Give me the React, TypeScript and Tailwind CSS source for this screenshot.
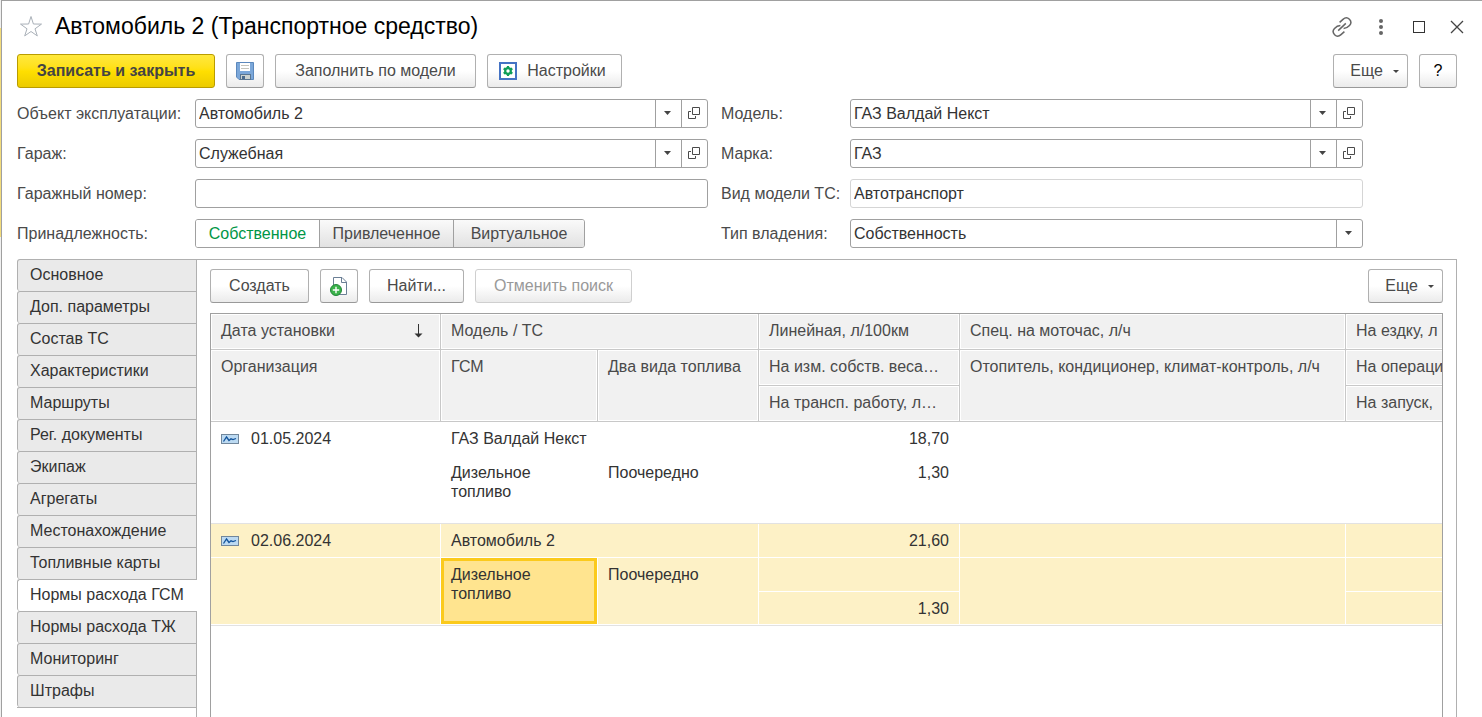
import { useState } from 'react';
import type { ReactNode } from 'react';

const tabs = [
  'Основное',
  'Доп. параметры',
  'Состав ТС',
  'Характеристики',
  'Маршруты',
  'Рег. документы',
  'Экипаж',
  'Агрегаты',
  'Местонахождение',
  'Топливные карты',
  'Нормы расхода ГСМ',
  'Нормы расхода ТЖ',
  'Мониторинг',
  'Штрафы',
];

const ownership = ['Собственное', 'Привлеченное', 'Виртуальное'];

function classNames(...classes: (string | false)[]) {
  return classes.filter(Boolean).join(' ');
}

function StarIcon() {
  return (
    <svg width="24" height="24" viewBox="0 0 24 24" fill="none" stroke="#a9b0b8" strokeWidth="1">
      <path d="M12 1.5 L14.4 9 L22.5 9.1 L16 13.8 L18.3 20.9 L12 16.5 L5.7 20.9 L8 13.8 L1.5 9.1 L9.6 9 Z" />
    </svg>
  );
}

function LinkIcon() {
  return (
    <svg width="20" height="20" viewBox="0 0 20 20" fill="none" stroke="#666" strokeWidth="1.5">
      <path d="M7.6 5.4 L11 2.4 C13 0.6 15.6 0.5 17.4 2.3 C19.2 4.1 19.2 6.6 17.5 8.5 C16.2 9.9 14.6 11.3 11.6 11.4" />
      <path d="M12.4 14.6 L9 17.6 C7 19.4 4.4 19.5 2.6 17.7 C0.8 15.9 0.8 13.4 2.5 11.5 C3.8 10.1 5.4 8.7 8.4 8.6" />
      <path d="M6.2 13.6 L13.8 6.4" />
    </svg>
  );
}

function SaveIcon() {
  return (
    <svg width="18" height="18" viewBox="0 0 18 18">
      <path d="M0.5 0.5 H17.5 V17.5 H3 L0.5 15 Z" fill="#7ba7d9" stroke="#5b88bd" />
      <rect x="4" y="1" width="10" height="8" fill="#fff" />
      <path d="M5 3.5 H13 M5 6.5 H13" stroke="#c4c4bc" />
      <rect x="4.5" y="12.5" width="10" height="5" fill="#ccd2cf" stroke="#5a7590" />
      <rect x="6" y="14" width="3" height="3" fill="#4a6a8c" />
    </svg>
  );
}

function SettingsIcon() {
  return (
    <svg width="18" height="18" viewBox="0 0 18 18">
      <rect x="1" y="1" width="16" height="16" fill="#fff" stroke="#4573c4" strokeWidth="2" />
      <circle cx="9" cy="9" r="2.8" fill="none" stroke="#0f9d58" strokeWidth="2.2" />
      <path
        d="M9 4 V6 M9 12 V14 M4.7 6.5 L6.4 7.5 M11.6 10.5 L13.3 11.5 M4.7 11.5 L6.4 10.5 M11.6 7.5 L13.3 6.5"
        stroke="#0f9d58"
        strokeWidth="2.2"
      />
    </svg>
  );
}

function CopyIcon() {
  return (
    <svg width="18" height="20" viewBox="0 0 18 20">
      <path d="M3.5 1.5 H12 L16.5 6 V18.5 H3.5 Z" fill="#fff" stroke="#6b7f95" />
      <path d="M11.5 1.5 V6.5 H16.5" fill="none" stroke="#6b7f95" />
      <circle cx="6" cy="14" r="5.5" fill="#3bb24a" stroke="#22863a" />
      <path d="M6 10.8 V17.2 M2.8 14 H9.2" stroke="#fff" strokeWidth="1.4" />
    </svg>
  );
}

function OpenIcon() {
  return (
    <svg width="12" height="12" viewBox="0 0 12 12" fill="none" stroke="#4a4a4a">
      <path d="M4.5 0.5 H11.5 V7.5 H4.5 Z" />
      <path d="M3 4.5 H0.5 V11.5 H7.5 V9" />
    </svg>
  );
}

function RecordIcon() {
  return (
    <svg width="18" height="10" viewBox="0 0 18 10" className="shrink-0">
      <rect x="0.5" y="0.5" width="17" height="9" fill="#bcdaf2" stroke="#71879c" />
      <path d="M2.5 7.5 L5.5 3 L8 6.5 L10 4.8 L12 5.5 L15 4.5" fill="none" stroke="#11539c" strokeWidth="1.3" />
    </svg>
  );
}

function Caret({ small = false }: { small?: boolean }) {
  return (
    <svg width={small ? 6 : 7} height={small ? 3 : 4} viewBox="0 0 8 4" preserveAspectRatio="none" fill="#444">
      <path d="M0 0 H8 L4 4 Z" />
    </svg>
  );
}

type ButtonProps = { children: ReactNode; label?: string; className?: string; disabled?: boolean };

function Button({ children, label, className = 'px-4', disabled = false }: ButtonProps) {
  return (
    <button
      type="button"
      aria-label={label}
      disabled={disabled}
      className={classNames(
        'flex h-[34px] shrink-0 items-center justify-center rounded-[3px] border bg-linear-to-b from-white from-50% to-[#ebebeb] whitespace-nowrap',
        disabled ? 'border-[#cfcfcf] text-[#999]' : 'border-[#b0b0b0] border-b-[#999] text-[#4a4a4a]',
        className
      )}
    >
      {children}
    </button>
  );
}

type FieldProps = { id: string; label: string; value?: string; kind?: 'ref' | 'select' | 'text' | 'readonly'; second?: boolean };

function Field({ id, label, value = '', kind = 'ref', second = false }: FieldProps) {
  const isList = kind === 'ref' || kind === 'select';
  return (
    <>
      <label htmlFor={id} className={classNames('whitespace-nowrap text-[#4a4a4a]', second && 'pl-[13px]')}>
        {label}
      </label>
      <div
        className={classNames(
          'flex h-[29px] min-w-0 rounded-[3px] border bg-white',
          kind === 'readonly' ? 'border-[#d5d5d5]' : 'border-[#a0a0a0]'
        )}
      >
        {isList ? (
          <div className="relative flex min-w-0 flex-1">
            <select id={id} defaultValue={value} className="min-w-0 flex-1 appearance-none pr-7 pl-[3px] outline-none">
              <option>{value}</option>
            </select>
            <span className="pointer-events-none absolute inset-y-0 right-0 flex w-[26px] items-center justify-center border-l border-[#a0a0a0] pr-0.5 pb-px">
              <Caret />
            </span>
          </div>
        ) : (
          <input id={id} defaultValue={value} readOnly={kind === 'readonly'} className="min-w-0 flex-1 px-[3px] outline-none" />
        )}
        {kind === 'ref' && (
          <button
            type="button"
            aria-label="Открыть"
            className="flex w-[26px] items-center justify-center border-l border-[#a0a0a0] pr-px pb-px"
          >
            <OpenIcon />
          </button>
        )}
      </div>
    </>
  );
}

function HeadCell({ children, rowSpan, colSpan }: { children: ReactNode; rowSpan?: number; colSpan?: number }) {
  return (
    <th
      rowSpan={rowSpan}
      colSpan={colSpan}
      className="overflow-hidden border-r border-b border-[#c8c8c8] bg-[#f1f1f1] px-2.5 pt-[7px] text-left align-top font-normal whitespace-nowrap text-[#4a4a4a] shadow-[inset_0_0_0_1px_#fff]"
    >
      {children}
    </th>
  );
}

type CellProps = { children?: ReactNode; rowSpan?: number; colSpan?: number; className?: string; selected?: boolean };

function Cell({ children, rowSpan, colSpan, className = '', selected = false }: CellProps) {
  return (
    <td
      rowSpan={rowSpan}
      colSpan={colSpan}
      className={classNames(
        'pt-[7px] pl-2.5 align-top leading-[19px]',
        selected ? 'border-r border-b border-white bg-[#fdf1c6] pr-2.5' : 'pr-[11px]',
        className
      )}
    >
      {children}
    </td>
  );
}

function DateValue({ value }: { value: string }) {
  return (
    <div className="flex items-center gap-3">
      <RecordIcon />
      {value}
    </div>
  );
}

function RatesTable() {
  return (
    <table className="w-full min-w-[1320px] table-fixed border-separate border-spacing-0">
      <colgroup>
        <col className="w-[230px]" />
        <col className="w-[157px]" />
        <col className="w-[161px]" />
        <col className="w-[201px]" />
        <col className="w-[386px]" />
        <col />
      </colgroup>
      <thead className="leading-[19px]">
        <tr className="h-9">
          <HeadCell>
            <span className="flex items-center justify-between pr-[7px]">
              Дата установки
              <svg width="9" height="14" viewBox="0 0 9 14" fill="#333">
                <path d="M4 0 H5 V9.5 H8.5 L4.5 13.5 L0.5 9.5 H4 Z" />
              </svg>
            </span>
          </HeadCell>
          <HeadCell colSpan={2}>Модель / ТС</HeadCell>
          <HeadCell>Линейная, л/100км</HeadCell>
          <HeadCell>Спец. на моточас, л/ч</HeadCell>
          <HeadCell>На ездку, л</HeadCell>
        </tr>
        <tr className="h-9">
          <HeadCell rowSpan={2}>Организация</HeadCell>
          <HeadCell rowSpan={2}>ГСМ</HeadCell>
          <HeadCell rowSpan={2}>Два вида топлива</HeadCell>
          <HeadCell>На изм. собств. веса…</HeadCell>
          <HeadCell rowSpan={2}>Отопитель, кондиционер, климат-контроль, л/ч</HeadCell>
          <HeadCell>На операцию</HeadCell>
        </tr>
        <tr className="h-9">
          <HeadCell>На трансп. работу, л…</HeadCell>
          <HeadCell>На запуск,</HeadCell>
        </tr>
      </thead>
      <tbody className="text-[#333]">
        <tr className="h-[34px]">
          <Cell>
            <DateValue value="01.05.2024" />
          </Cell>
          <Cell colSpan={2}>ГАЗ Валдай Некст</Cell>
          <Cell className="text-right">18,70</Cell>
          <Cell colSpan={2} />
        </tr>
        <tr className="h-[68px]">
          <Cell className="border-b border-[#e2e2e2]" />
          <Cell className="border-b border-[#e2e2e2]">Дизельное топливо</Cell>
          <Cell className="border-b border-[#e2e2e2]">Поочередно</Cell>
          <Cell className="border-b border-[#e2e2e2] text-right">1,30</Cell>
          <Cell colSpan={2} className="border-b border-[#e2e2e2]" />
        </tr>
        <tr className="h-[34px] shadow-[inset_0_1px_0_#fff]">
          <Cell selected>
            <DateValue value="02.06.2024" />
          </Cell>
          <Cell selected colSpan={2}>
            Автомобиль 2
          </Cell>
          <Cell selected className="text-right">
            21,60
          </Cell>
          <Cell selected />
          <Cell selected />
        </tr>
        <tr className="h-[34px]">
          <Cell selected rowSpan={2} />
          <td
            rowSpan={2}
            className="border-r border-b border-white bg-[#ffe48f] px-2.5 pt-[7px] align-top leading-[19px] shadow-[inset_0_0_0_3px_#fbca1c]"
          >
            Дизельное топливо
          </td>
          <Cell selected rowSpan={2}>
            Поочередно
          </Cell>
          <Cell selected />
          <Cell selected rowSpan={2} />
          <Cell selected />
        </tr>
        <tr className="h-[33px]">
          <Cell selected className="text-right">
            1,30
          </Cell>
          <Cell selected />
        </tr>
        <tr>
          <td colSpan={6} className="border-t border-[#e2e2e2]" />
        </tr>
      </tbody>
    </table>
  );
}

export default function App() {
  const [activeTab, setActiveTab] = useState('Нормы расхода ГСМ');

  return (
    <div className="flex h-screen overflow-hidden bg-white font-['Liberation_Sans',Arial,sans-serif] text-base text-[#333]">
      <div className="w-px shrink-0 bg-[#f0f0f0] pt-7">
        <div className="h-[209px] bg-[#f3dc7b]" />
      </div>
      <div className="flex min-w-0 flex-1 flex-col border-t border-l border-[#a0a0a0] pr-[25px] pl-[15px]">
        <header className="flex h-[53px] shrink-0 items-center pb-0.5">
          <button type="button" aria-label="В избранное" className="mx-0.5">
            <StarIcon />
          </button>
          <h1 className="ml-2.5 flex-1 text-[23px] whitespace-nowrap text-black">Автомобиль 2 (Транспортное средство)</h1>
          <div className="-mr-[19px] flex items-center">
            <button type="button" aria-label="Ссылка" className="flex w-10 justify-center">
              <LinkIcon />
            </button>
            <button type="button" aria-label="Меню" className="flex w-[38px] justify-center">
              <svg width="4" height="16" viewBox="0 0 4 16" fill="#666">
                <circle cx="2" cy="2" r="2" />
                <circle cx="2" cy="8" r="2" />
                <circle cx="2" cy="14" r="2" />
              </svg>
            </button>
            <button type="button" aria-label="Развернуть" className="flex w-[38px] justify-center">
              <svg width="12" height="12" viewBox="0 0 12 12" fill="none" stroke="#333">
                <rect x="0.5" y="0.5" width="11" height="11" />
              </svg>
            </button>
            <button type="button" aria-label="Закрыть" className="flex w-[38px] justify-center">
              <svg width="14" height="14" viewBox="0 0 14 14" stroke="#444" strokeWidth="1.3">
                <path d="M1 1 L13 13 M13 1 L1 13" />
              </svg>
            </button>
          </div>
        </header>

        <div className="flex gap-[11px]">
          <button
            type="button"
            className="h-[34px] w-[198px] shrink-0 rounded-[3px] border border-[#b99c00] bg-linear-to-b from-[#ffe83b] via-[#ffdf00] to-[#eccb00] font-bold whitespace-nowrap text-[#444]"
          >
            Записать и закрыть
          </button>
          <Button label="Записать" className="w-[38px]">
            <SaveIcon />
          </Button>
          <Button className="w-[201px]">Заполнить по модели</Button>
          <Button className="w-[135px] gap-2.5 pr-1">
            <SettingsIcon />
            Настройки
          </Button>
          <div className="ml-auto flex gap-[11px]">
            <Button className="w-[75px] gap-2.5 pl-2">
              Еще
              <Caret small />
            </Button>
            <Button label="Справка" className="w-[38px] text-black">
              ?
            </Button>
          </div>
        </div>

        <div className="mt-[11px] grid grid-cols-[178px_1fr_142px_1fr] items-center gap-y-[11px] pr-[94px]">
          <Field id="object" label="Объект эксплуатации:" value="Автомобиль 2" />
          <Field id="model" label="Модель:" value="ГАЗ Валдай Некст" second />
          <Field id="garage" label="Гараж:" value="Служебная" />
          <Field id="brand" label="Марка:" value="ГАЗ" second />
          <Field id="garage-number" label="Гаражный номер:" kind="text" />
          <Field id="model-kind" label="Вид модели ТС:" value="Автотранспорт" kind="readonly" second />
          <span id="ownership-label" className="text-[#4a4a4a]">
            Принадлежность:
          </span>
          <div
            role="radiogroup"
            aria-labelledby="ownership-label"
            className="grid h-[29px] grid-cols-[124px_134px_130px] divide-x divide-[#a0a0a0] overflow-hidden rounded-[3px] border border-[#a0a0a0] justify-self-start"
          >
            {ownership.map((item, index) => (
              <label
                key={item}
                className="flex items-center justify-center bg-linear-to-b from-[#fafafa] to-[#e2e2e2] text-[#4a4a4a] has-checked:from-white has-checked:to-white has-checked:text-[#009646]"
              >
                <input type="radio" name="ownership" defaultChecked={index === 0} className="sr-only" />
                {item}
              </label>
            ))}
          </div>
          <Field id="ownership-type" label="Тип владения:" value="Собственность" kind="select" second />
        </div>

        <div className="mt-[11px] flex min-h-0 flex-1">
          <nav className="flex w-[180px] shrink-0 flex-col">
            {tabs.map((tab) => (
              <button
                key={tab}
                type="button"
                onClick={() => setActiveTab(tab)}
                className={classNames(
                  'h-8 shrink-0 rounded-l-[3px] border-t border-l border-[#b0b0b0] pb-0.5 pl-3 text-left whitespace-nowrap',
                  tab === activeTab ? 'bg-white' : 'border-r bg-[#eaeaea]'
                )}
              >
                {tab}
              </button>
            ))}
            <div className="flex-1 border-t border-r border-[#b0b0b0]" />
          </nav>
          <section className="flex min-w-0 flex-1 flex-col border-t border-r border-[#b0b0b0] px-[13px] pt-[9px]">
            <div className="flex gap-[11px]">
              <Button className="w-[99px]">Создать</Button>
              <Button label="Скопировать" className="w-[38px]">
                <CopyIcon />
              </Button>
              <Button className="w-[95px]">Найти...</Button>
              <Button disabled className="w-[157px]">
                Отменить поиск
              </Button>
              <Button className="ml-auto w-[75px] gap-2.5 pl-2">
                Еще
                <Caret small />
              </Button>
            </div>
            <div className="mt-[10px] min-h-0 flex-1 overflow-hidden border-x border-t border-[#a0a0a0]">
              <RatesTable />
            </div>
          </section>
        </div>
      </div>
    </div>
  );
}
